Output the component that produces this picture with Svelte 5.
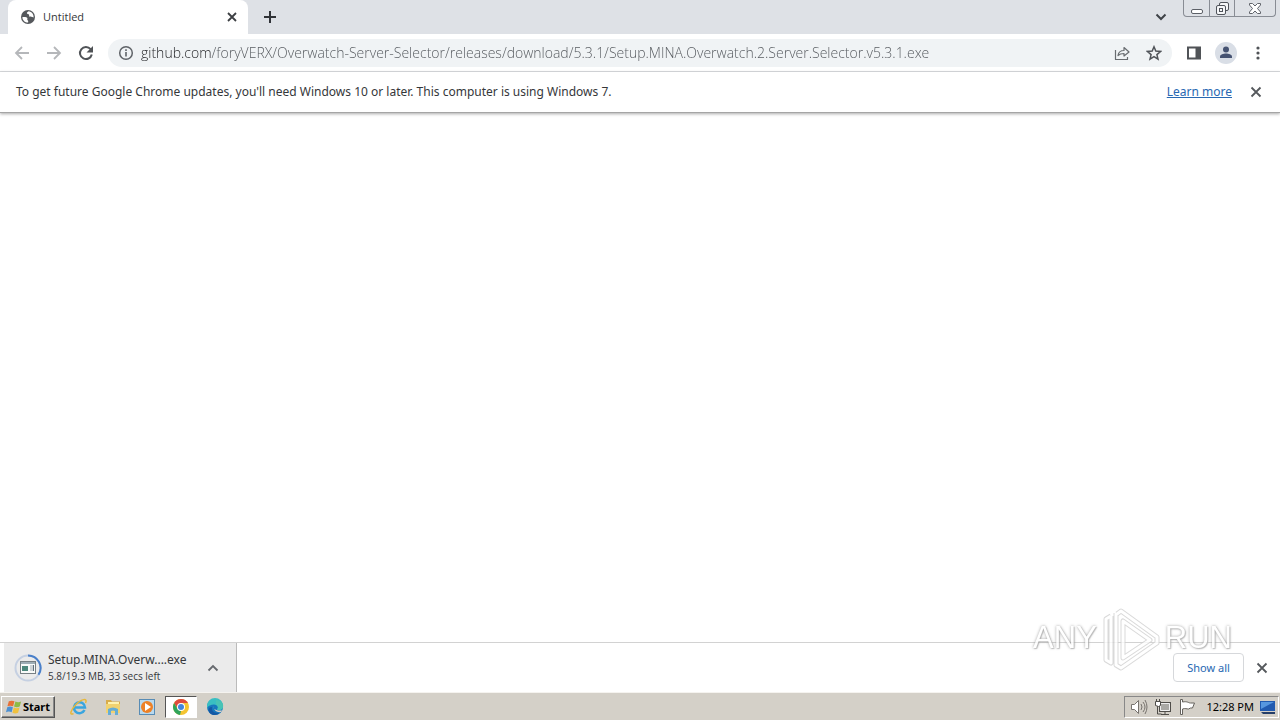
<script lang="ts">
  let url = $state('github.com/foryVERX/Overwatch-Server-Selector/releases/download/5.3.1/Setup.MINA.Overwatch.2.Server.Selector.v5.3.1.exe');
</script>

{#snippet cross()}
  <svg width="12" height="12" viewBox="0 0 12 12"><path d="M1.5 1.5l9 9m0-9l-9 9" fill="none" stroke="#55585c" stroke-width="1.800" /></svg>
{/snippet}

<div class="screen">
  <header class="tabs">
    <div class="tab">
      <svg width="16" height="16" viewBox="0 0 16 16"><circle cx="8" cy="8" r="7" fill="#55585c" /><path d="M2.3 8.2c2.2-.3 4.5-.1 5 .9.5 1.1-.6 1.2.3 2.1.9.8.6 1.5.5 2.4-3.2 0-5.4-2.2-5.8-5.4zM8.6 2.3c-.9.9-1.9.9-1.7 2 .2 1 1.8.5 2.2 1.4.4.9-.5 1.3.3 1.9.8.7 2.6 0 4.2.8.2-3-1.9-5.7-5-6.1z" fill="#fff" /></svg>
      <span>Untitled</span>
      <button aria-label="Close tab"><svg width="12" height="12" viewBox="0 0 12 12"><path d="M2 2l8 8m0-8l-8 8" fill="none" stroke="#3c3f43" stroke-width="1.800" /></svg></button>
    </div>
    <button class="new" aria-label="New tab"><svg width="14" height="14" viewBox="0 0 14 14"><path d="M7 1v12M1 7h12" stroke="#303338" stroke-width="2" /></svg></button>
    <button class="search" aria-label="Search tabs"><svg width="12" height="8" viewBox="0 0 12 8"><path d="M1.5 1.5L6 6l4.500-4.500" fill="none" stroke="#3f4348" stroke-width="2" /></svg></button>
    <div class="window">
      <button aria-label="Minimize"><svg width="14" height="14" viewBox="0 0 14 14"><rect x="1.500" y="8.500" width="11" height="4" rx="1.500" fill="#fff" stroke="#5c6067" /></svg></button>
      <button aria-label="Restore"><svg width="14" height="14" viewBox="0 0 14 14" fill="#f5f6f8" stroke="#50545b"><rect x="4.500" y="1.500" width="9" height="8" rx="1.500" /><rect x="1.500" y="4.500" width="9" height="9" rx="1.500" /><rect x="4.500" y="7.500" width="3" height="3" /></svg></button>
      <button aria-label="Close"><svg width="14" height="14" viewBox="0 0 14 14"><path d="M1.500 2.500h3L7 5l2.500-2.500h3v1.500L9.500 7.500l3 3.500v1.500h-3L7 10l-2.500 2.500h-3V11l3-3.500-3-3.500z" fill="#fff" stroke="#60646b" /></svg></button>
    </div>
  </header>

  <nav class="toolbar">
    <button aria-label="Back"><svg width="16" height="16" viewBox="0 0 16 16"><path d="M15 8H2m6-6L2 8l6 6" fill="none" stroke="#b5b7ba" stroke-width="1.800" /></svg></button>
    <button aria-label="Forward"><svg width="16" height="16" viewBox="0 0 16 16"><path d="M1 8h13M8 2l6 6-6 6" fill="none" stroke="#b5b7ba" stroke-width="1.800" /></svg></button>
    <button aria-label="Reload"><svg width="16" height="16" viewBox="0 0 16 16"><path d="M12.600 4.200A6 6 0 1 0 13.800 9.500" fill="none" stroke="#505357" stroke-width="2" /><path d="M15 1v6.500H8.500z" fill="#505357" /></svg></button>
    <div class="address">
      <button aria-label="Site information"><svg width="16" height="16" viewBox="0 0 16 16"><circle cx="8" cy="8" r="6.300" fill="none" stroke="#5f6368" stroke-width="1.500" /><path d="M8 7v4.500M8 4.300v1.700" stroke="#5f6368" stroke-width="1.600" /></svg></button>
      <input aria-label="Address" bind:value={url} spellcheck="false" />
      <button aria-label="Share"><svg width="16" height="16" viewBox="0 0 16 16"><path d="M1.500 5v9.500h12V12M4 10.500c.5-3.500 2.500-5 6-5V2.500L15 7l-5 4V8.500c-3 0-4.500.5-6 2z" fill="none" stroke="#686c70" stroke-width="1.200" stroke-linejoin="round" /></svg></button>
      <button aria-label="Bookmark"><svg width="16" height="16" viewBox="0 0 16 16"><path d="M8 1.800l1.800 4.300 4.700.4-3.600 3.100 1.100 4.600L8 11.700l-4 2.500 1.100-4.600-3.600-3.100 4.700-.4z" fill="none" stroke="#505459" stroke-width="1.500" /></svg></button>
    </div>
    <button aria-label="Side panel"><svg width="16" height="16" viewBox="0 0 16 16"><path d="M2 2.500h12v11H2z" fill="none" stroke="#505357" stroke-width="2" /><path d="M9.500 2H14v12H9.500z" fill="#505357" /></svg></button>
    <button class="profile" aria-label="Profile"><svg width="22" height="22" viewBox="0 0 22 22"><circle cx="11" cy="11" r="11" fill="#d9dee6" /><circle cx="11" cy="7.500" r="3" fill="#465372" /><path d="M5 16v-1.500c0-2 3.500-3 6-3s6 1 6 3V16z" fill="#465372" /></svg></button>
    <button aria-label="Menu"><svg width="16" height="16" viewBox="0 0 16 16" fill="#505357"><circle cx="8" cy="3" r="1.600" /><circle cx="8" cy="8" r="1.600" /><circle cx="8" cy="13" r="1.600" /></svg></button>
  </nav>

  <div class="notice">
    <span>To get future Google Chrome updates, you'll need Windows 10 or later. This computer is using Windows 7.</span>
    <a href="#learn">Learn more</a>
    <button aria-label="Dismiss">{@render cross()}</button>
  </div>

  <main></main>

  <footer class="shelf">
    <div class="download">
      <svg width="28" height="28" viewBox="0 0 28 28"><circle cx="14" cy="14" r="12.500" fill="none" stroke="#c5d0e2" stroke-width="2" /><path d="M14 1.500A12.500 12.500 0 0 1 24.500 20.800" fill="none" stroke="#4a80ca" stroke-width="2" /><rect x="6.500" y="7.500" width="15" height="12" fill="#f8faf9" stroke="#777f83" /><path d="M7 8h14v2H7z" fill="#9eadb5" /><path d="M8 12h6v5H8z" fill="#4c877b" /><path d="M16 12h3m-3 2h3m-3 2h3" stroke="#a3acb3" /><path d="M19.500 11v6" stroke="#63717c" /></svg>
      <div class="file"><span>Setup.MINA.Overw....exe</span><small>5.8/19.3 MB, 33 secs left</small></div>
      <button aria-label="Download options"><svg width="12" height="8" viewBox="0 0 12 8"><path d="M1.500 6.500L6 2l4.500 4.500" fill="none" stroke="#66696e" stroke-width="1.800" /></svg></button>
    </div>
    <button class="show">Show all</button>
    <button class="dismiss" aria-label="Close downloads">{@render cross()}</button>
    <div class="mark" aria-hidden="true">
      <span>ANY</span>
      <svg width="60" height="64" viewBox="0 0 60 64" fill="none" stroke-linejoin="round"><g stroke="#d0d0d0" stroke-width="5"><path d="M10 8L5 11v41l5 3V8M16 6l4-3 36 26v6L20 60l-5-3V5m7 8v37l27-18z" /></g><g stroke="#fff" stroke-width="3"><path d="M10 8L5 11v41l5 3V8M16 6l4-3 36 26v6L20 60l-5-3V5m7 8v37l27-18z" /></g></svg>
      <span>RUN</span>
    </div>
  </footer>

  <div class="taskbar">
    <button class="start"><svg width="17" height="16" viewBox="0 0 18 16"><path d="M3 2c2-1 4-1 6 0L7.500 7.300c-2-1-4-1-6 0z" fill="#e77036" /><path d="M10 2.300c2 1 4 1 6 0l-1.500 5.300c-2 1-4 1-6 0z" fill="#8dbb45" /><path d="M1.300 8.300c2-1 4-1 6 0L6 13.600c-2-1-4-1-6 0z" fill="#4c90d2" /><path d="M8.300 8.600c2 1 4 1 6 0L12.800 14c-2 1-4 1-6 0z" fill="#f0c13e" /></svg>Start</button>
    <div class="apps">
      <button aria-label="Internet Explorer"><svg width="18" height="18" viewBox="0 0 18 18"><path d="M14.500 12a5.500 5.500 0 1 1 .5-2.500H5" fill="none" stroke="#39a5df" stroke-width="2.500" /><path d="M3.500 15.500C-1 18 .5 12 6 6.500S18-.5 15.500 5" fill="none" stroke="#e7b83b" stroke-width="1.500" /></svg></button>
      <button aria-label="Explorer"><svg width="18" height="18" viewBox="0 0 18 18"><path d="M2 2h5l1 1.500h8V15H2z" fill="#d8ac4b" /><path d="M4 4h11v4H4z" fill="#fff3af" /><path d="M2 6h14v9H2z" fill="#f1d270" /><path d="M4 17v-6q5-3 10 0v6h-3v-4q-2-1-4 0v4z" fill="#65add5" /></svg></button>
      <button aria-label="Media Player"><svg width="18" height="18" viewBox="0 0 18 18"><rect x="1.500" y="1.500" width="15" height="15" fill="#b9d9ee" stroke="#588cb5" /><circle cx="9" cy="9" r="6" fill="#ed8127" /><path d="M7 5l6 4-6 4z" fill="#fff" /></svg></button>
      <button class="active" aria-label="Chrome"><svg width="18" height="18" viewBox="0 0 18 18"><circle cx="9" cy="9" r="8" fill="#f4c430" /><path d="M2.100 5A8 8 0 0 1 16 5H9L6 11z" fill="#df4b3e" /><path d="M2.100 5l3.500 6L9 13l-1 4A8 8 0 0 1 2.100 5z" fill="#2fa45b" /><circle cx="9" cy="9" r="4" fill="#fff" /><circle cx="9" cy="9" r="3" fill="#4285dd" /></svg></button>
      <button aria-label="Edge"><svg width="18" height="18" viewBox="0 0 18 18"><circle cx="9" cy="9" r="8" fill="#1677bd" /><path d="M1 8a8 8 0 0 1 16 0c.5 4-4 5-6 3.500 2-2 0-5-3-5S2 8 1 10z" fill="#39bfc2" /><path d="M10 2c5 0 8 4 7 7s-4 3-6 2.500c2-2 1-4-1-5z" fill="#48c3b5" /><path d="M6 9c-1 4 3 7 8 5.500C10 19 3 17 2.500 12c0-2 2-3.500 3.500-3z" fill="#1458a4" /><path d="M8 8c-1 2 0 5 8 4.500l-1 1.500c-5 1-8-3-7-6z" fill="#d4d0c8" /></svg></button>
    </div>
    <div class="tray">
      <svg width="18" height="18" viewBox="0 0 18 18"><path d="M1.500 6.500h3l4-4v13l-4-4h-3z" fill="#fff" stroke="#77736e" /><path d="M11 6q2 3 0 6m2-8q4 5 0 10m2-12q4 7 0 14" fill="none" stroke="#77736e" /></svg>
      <svg width="18" height="18" viewBox="0 0 18 18"><rect x="5.500" y="4.500" width="11" height="9" fill="#aaa9a5" stroke="#4f4d49" /><path d="M6.500 5.500h9v7h-9z" fill="none" stroke="#eee" /><path d="M11 14v2m-4 .5h8M3.500 8v8h4" fill="none" stroke="#4f4d49" /><path d="M1.500 3.500h5v4l-2 1-3-1zM2.500 1v3m3-3v3" fill="#fff" stroke="#4f4d49" /></svg>
      <svg width="18" height="18" viewBox="0 0 18 18"><path d="M2.500 1.500v15h2V11c3-1 4 0 6 0l2-1h2l2-5h-4c-2 0-3-2-8-1V1.500z" fill="#fff" stroke="#65625d" /></svg>
      <time>12:28 PM</time>
      <svg width="16" height="16" viewBox="0 0 16 16"><path d="M0 2h15v10H0z" fill="#225bb0" /><path d="M1 3h13L1 10z" fill="#5797df" /><path d="M1 13h14v2H3z" fill="#253e68" /></svg>
    </div>
  </div>
</div>

<style>
  :global(body) { margin: 0; }
  .screen { min-height: 100vh; display: flex; flex-direction: column; background: #fff; color: #35373a; font: 12px/16px "Noto Sans", "Open Sans", sans-serif; }
  button, input { border: 0; padding: 0; margin: 0; background: none; color: inherit; font: inherit; }
  button { display: inline-flex; align-items: center; justify-content: center; flex: none; }
  svg { display: block; flex: none; }
  .tabs { height: 34px; background: #dee1e6; display: flex; padding-left: 8px; }
  .tab { width: 240px; box-sizing: border-box; display: flex; align-items: center; gap: 7px; padding: 0 10px 0 12px; background: #fff; border-radius: 8px 8px 0 0; font: 11px/16px "Open Sans", sans-serif; }
  .tab span { flex: 1; }
  .new { width: 44px; }
  .search { margin-left: auto; width: 44px; }
  .window { display: flex; height: 16px; margin-right: 4px; border: 1px solid #888c94; border-top: 0; border-radius: 0 0 4px 4px; }
  .window button { width: 25px; }
  .window button + button { border-left: 1px solid #888c94; }
  .window button:last-child { width: 41px; }
  .toolbar { height: 38px; box-sizing: border-box; display: flex; align-items: center; gap: 16px; padding: 0 14px; border-bottom: 1px solid #d7d9dc; }
  .address { display: flex; align-items: center; flex: 1; min-width: 0; height: 28px; box-sizing: border-box; padding: 0 10px; gap: 16px; background: #f0f3f5; border-radius: 14px; margin: 0 -2px; }
  .address input { flex: 1; min-width: 0; height: 24px; margin-left: -9px; font: 300 14px/24px "Open Sans", sans-serif; outline: 0; background: linear-gradient(90deg, #202124 70px, #53575c 70px); background-clip: text; -webkit-text-fill-color: transparent; }
  .profile { margin: 0 -3px; }
  .toolbar > button:last-child { margin-right: 0; }
  .notice { display: flex; align-items: center; height: 40px; padding: 0 18px 0 16px; border-bottom: 1px solid #a5a5a5; box-shadow: 0 1px 3px #aaa; }
  .notice a { margin-left: auto; margin-right: 18px; color: #2868b2; }
  main { flex: 1; }
  .shelf { position: relative; display: flex; align-items: center; height: 49px; border-top: 1px solid #d2d2d2; padding: 0 12px 0 4px; }
  .download { align-self: stretch; width: 233px; box-sizing: border-box; display: flex; align-items: center; background: #ebebeb; border-right: 1px solid #bbb; padding: 0 17px 0 10px; gap: 6px; }
  .file { flex: 1; display: flex; flex-direction: column; white-space: nowrap; }
  .file small { font: 10px/16px "Open Sans", sans-serif; }
  .show { margin-left: auto; width: 71px; height: 29px; box-sizing: border-box; border: 1px solid #d6d8db; border-radius: 4px; color: #2868b2; font-size: 11px; }
  .dismiss { margin-left: 12px; }
  .mark { position: absolute; right: 48px; bottom: 20px; display: flex; align-items: center; gap: 4px; color: #fff; font: 31px/48px "Liberation Sans Narrow", "Liberation Sans", sans-serif; text-shadow: 0 0 3px #888, 1px 1px 1px #bbb; pointer-events: none; opacity: .8; }
  .mark span { padding-bottom: 4px; }
  .taskbar { height: 28px; box-sizing: border-box; padding: 2px 1px; border-top: 1px solid #f5f3ef; background: #d4d0c8; display: flex; align-items: center; }
  .start { width: 54px; height: 22px; box-sizing: border-box; font-size: 11px; font-weight: 700; color: #000; border: 1px solid; border-color: #fff #555 #555 #fff; box-shadow: inset -1px -1px #888; }
  .apps { display: flex; margin-left: 8px; gap: 2px; }
  .apps button { width: 32px; height: 22px; }
  .apps .active { background: #fff; border: 1px solid; border-color: #555 #fff #fff #555; box-sizing: border-box; }
  .tray { margin-left: auto; height: 20px; display: flex; align-items: center; gap: 6px; padding: 0 2px 0 5px; border: 1px solid; border-color: #888 #fff #fff #888; color: #000; font-size: 11px; }
  time { margin-left: 4px; }
</style>
